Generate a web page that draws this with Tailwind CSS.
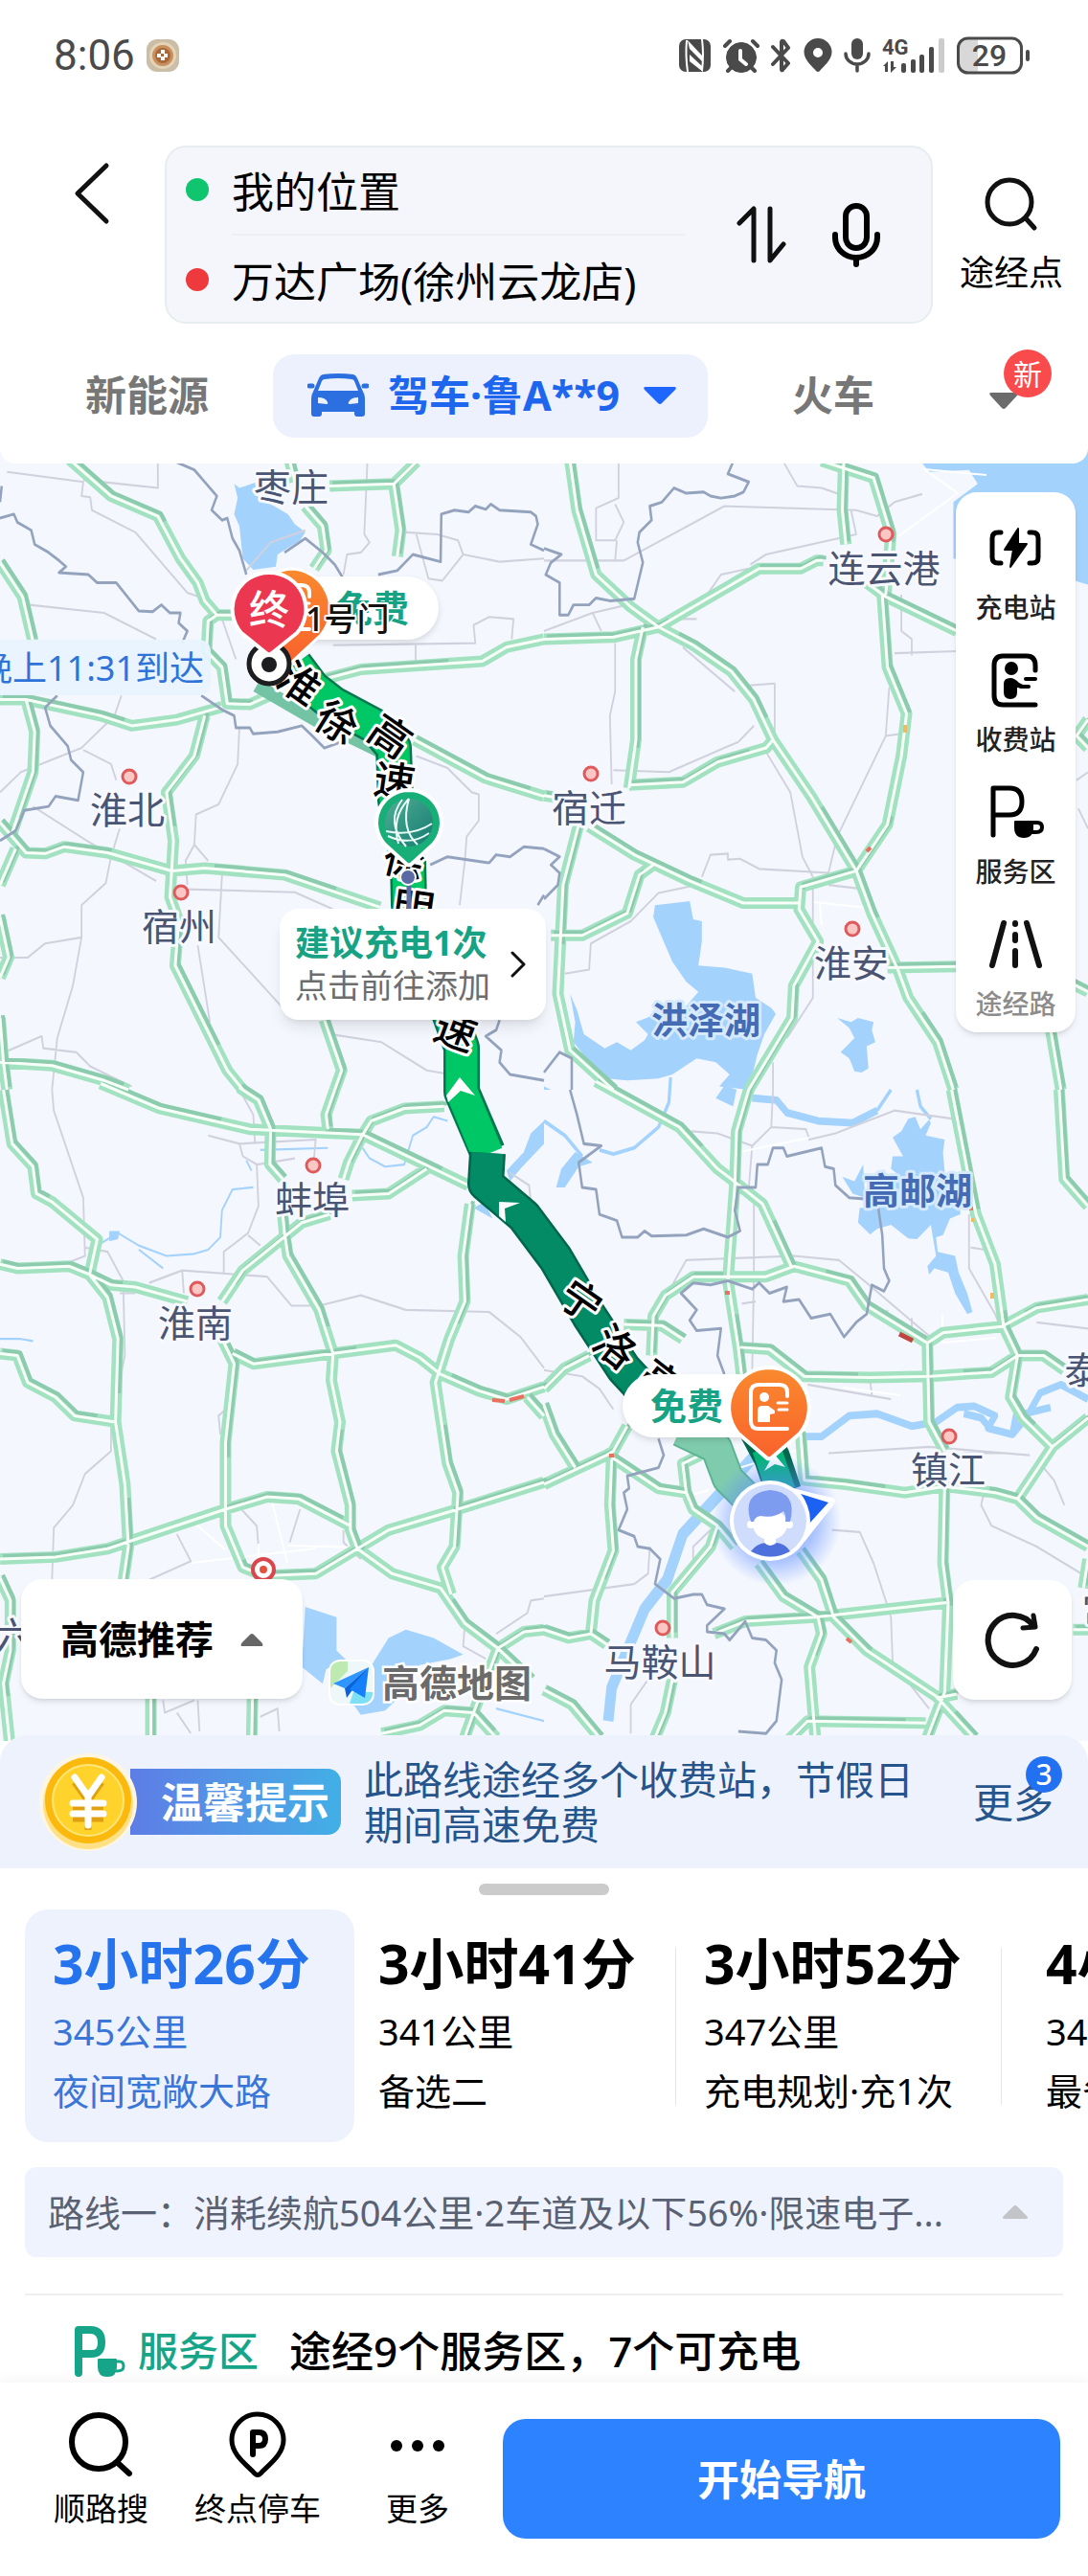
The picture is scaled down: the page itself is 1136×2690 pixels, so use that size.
<!DOCTYPE html>
<html lang="zh-CN">
<head>
    <meta charset="UTF-8">
    <meta name="viewport" content="width=device-width, initial-scale=1.0">
    <title>高德地图 - 路线规划</title>
    <script src="https://cdn.jsdelivr.net/npm/@tailwindcss/browser@4"></script>
</head>
<body class="bg-white text-black overflow-x-hidden font-['Noto_Sans','Noto_Sans_CJK_SC',sans-serif]">

    <!-- 顶部 -->
    <header class="relative z-10 bg-white rounded-b-2xl">
        <!-- 状态栏 -->
        <div class="flex items-center justify-between h-[116px] pl-14 pr-[59px] text-[#4a4a4a]">
            <div class="flex items-center gap-3">
                <span class="text-[44px] leading-none font-['Roboto',sans-serif]">8:06</span>
                <svg class="w-[34px] h-[34px]" viewBox="0 0 34 34">
                    <rect width="34" height="34" rx="11" fill="#cbbda6"/>
                    <circle cx="17" cy="17" r="14" fill="#e3d3b8"/>
                    <circle cx="17" cy="17" r="11" fill="#c98f5c"/>
                    <circle cx="17" cy="17" r="8" fill="#a8683a"/>
                    <path d="M17 11v12M11 17h12" stroke="#fff" stroke-width="4" stroke-dasharray="4 3"/>
                </svg>
            </div>
            <div class="flex items-center gap-3">
                <!-- NFC -->
                <svg class="w-[34px] h-9" viewBox="0 0 34 36" fill="currentColor">
                    <rect x="0" y="1" width="33" height="34" rx="7"/>
                    <path d="M8 2q-1.500 16 1 33M24 1q2 16 0 33" fill="none" stroke="#fff" stroke-width="2"/>
                    <path d="M9 2L24 18v6L11 11zM11 17l14 13v5L11 24z" fill="#fff"/>
                </svg>
                <!-- 闹钟 -->
                <svg class="w-[38px] h-9" viewBox="0 0 38 36" fill="currentColor" stroke="currentColor" stroke-linecap="round">
                    <circle cx="19" cy="20" r="15.500"/>
                    <path d="M2 8l5-5M36 8l-5-5M8 31l-3 3M30 31l3 3" stroke-width="4"/>
                    <path d="M18 13v9l6 5" fill="none" stroke="#fff" stroke-width="4"/>
                </svg>
                <!-- 蓝牙 -->
                <svg class="w-[22px] h-9" viewBox="0 0 22 36" fill="none" stroke="currentColor" stroke-width="4" stroke-linecap="round" stroke-linejoin="round">
                    <path d="M2 9l16 17-6 7q-1 1-1-1V4q0-2 2-1l5 7L2 27"/>
                </svg>
                <!-- 定位 -->
                <svg class="w-[30px] h-9" viewBox="0 0 30 36" fill="currentColor">
                    <path fill-rule="evenodd" d="M15 0a14.500 14.500 0 0 1 14.500 14.500C29.500 23 20 30 17 34q-2 2-4 0C10 30 .5 23 .5 14.500A14.500 14.500 0 0 1 15 0zm0 10a5 5 0 1 0 0 10 5 5 0 0 0 0-10z"/>
                </svg>
                <!-- 麦克风 -->
                <svg class="w-[28px] h-9" viewBox="0 0 28 36" fill="none" stroke="currentColor" stroke-width="3.500" stroke-linecap="round">
                    <rect x="8" y="0" width="12" height="22" rx="6" fill="currentColor" stroke="none"/>
                    <path d="M2 16a12 11 0 0 0 24 0M14 28v6"/>
                </svg>
                <!-- 信号 -->
                <svg class="w-[66px] h-9" viewBox="0 0 66 36" fill="currentColor">
                    <text x="0" y="17" font-size="22" font-weight="700" font-family="Roboto, sans-serif">4G</text>
                    <path d="M1 29l5-5v11h-3v-6zM9 24h3v6h3l-6 6z"/>
                    <rect x="20" y="26" width="5" height="10" rx="2"/>
                    <rect x="30" y="22" width="5" height="14" rx="2"/>
                    <rect x="39" y="17" width="5" height="19" rx="2"/>
                    <rect x="49" y="9" width="5" height="27" rx="2"/>
                    <rect x="59" y="0" width="6" height="36" rx="2" fill="#ccc"/>
                </svg>
                <!-- 电量 -->
                <svg class="w-[78px] h-10" viewBox="0 0 78 40">
                    <path d="M12 2h10v36H12A10 10 0 0 1 2 28V12A10 10 0 0 1 12 2z" fill="#d8d8d8"/>
                    <rect x="1.500" y="2" width="66" height="36" rx="10" fill="none" stroke="currentColor" stroke-width="3"/>
                    <rect x="72" y="14" width="4" height="12" rx="2" fill="currentColor"/>
                    <text x="34" y="31" font-size="32" font-weight="500" text-anchor="middle" fill="currentColor" font-family="Roboto, sans-serif">29</text>
                </svg>
            </div>
        </div>

        <!-- 起终点 -->
        <div class="flex items-start pt-9 pr-[26px]">
            <button aria-label="返回" class="w-[172px] pt-4 pl-[74px]">
                <svg class="w-11 h-[68px]" viewBox="0 0 44 68" fill="none" stroke="#111" stroke-width="5" stroke-linecap="round" stroke-linejoin="round">
                    <path d="M37 5L7 34l30 29"/>
                </svg>
            </button>
            <div class="flex flex-1 items-center h-[186px] pl-5 pr-[53px] rounded-[22px] border-2 border-[#e7edef] bg-[#f4f6fb]">
                <div class="flex-1 min-w-0">
                    <label class="flex items-center gap-6 h-[92px]">
                        <span class="size-6 shrink-0 rounded-full bg-[#0fc66e]"></span>
                        <input type="text" aria-label="起点" value="我的位置" class="w-full min-w-0 h-[60px] text-[44px] leading-none outline-none">
                    </label>
                    <div class="ml-12 border-t-2 border-[#eceff3]"></div>
                    <label class="flex items-center gap-6 h-[92px]">
                        <span class="size-6 shrink-0 rounded-full bg-[#ee3a3c]"></span>
                        <input type="text" aria-label="终点" value="万达广场(徐州云龙店)" class="w-full min-w-0 h-[60px] text-[44px] leading-none outline-none">
                    </label>
                </div>
                <button aria-label="交换起终点" class="ml-[54px] mr-12">
                    <svg class="w-[52px] h-[62px]" viewBox="0 0 52 62" fill="none" stroke="#111" stroke-width="5" stroke-linecap="round" stroke-linejoin="round">
                        <path d="M3 19L18 4v54M35 4v54l14-17"/>
                    </svg>
                </button>
                <button aria-label="语音输入">
                    <svg class="w-[50px] h-[68px]" viewBox="0 0 50 68" fill="none" stroke="#000" stroke-width="6" stroke-linecap="round">
                        <rect x="14" y="4" width="22" height="44" rx="11"/>
                        <path d="M3 34v3a22 21 0 0 0 44 0v-3M25 58v7"/>
                    </svg>
                </button>
            </div>
            <button class="flex flex-col items-center w-[108px] ml-7 pt-8 text-4xl leading-[54px]">
                <svg class="w-14 h-[58px] mb-4" viewBox="0 0 56 58" fill="none" stroke="#111" stroke-width="5" stroke-linecap="round">
                    <circle cx="26" cy="27" r="23"/>
                    <path d="M43 44l9 10"/>
                </svg>
                途经点
            </button>
        </div>

        <!-- 出行方式 -->
        <nav class="flex items-center h-[146px] pt-1 pl-[89px] pr-[38px] text-[43px] font-bold text-[#777]">
            <button>新能源</button>
            <button class="flex items-center h-[87px] ml-[67px] pl-9 pr-8 rounded-[22px] bg-[#ecf1fd] text-[#1f66ee]">
                <svg class="w-16 h-[46px] mr-5" viewBox="0 0 64 46">
                    <path fill="#2b6fe0" fill-rule="evenodd" d="M16 1Q32-1 48 1q3 1 4 4l6 14q2 3 2 7v16q0 3-3 3h-5q-3 0-3-3v-2H15v2q0 3-3 3H7q-3 0-3-3V26q0-4 2-7l6-14q1-3 4-4zm2 5q-2 0-3 2l-4 10h42L49 8q-1-2-3-2Q32 4 18 6zM11 25v6l9 1q2 0 1-2-2-5-10-5zm42 0v6l-9 1q-2 0-1-2 2-5 10-5z"/>
                    <path d="M2 13h3M59 13h3" stroke="#2b6fe0" stroke-width="5" stroke-linecap="round"/>
                </svg>
                驾车·鲁A**9
                <svg class="w-9 h-5 ml-6" viewBox="0 0 36 20"><path d="M3 1h30q3 0 1 3L20 18q-2 2-4 0L2 4Q0 1 3 1z" fill="#1f66ff"/></svg>
            </button>
            <button class="ml-[88px]">火车</button>
            <button aria-label="更多出行方式" class="relative ml-auto w-[66px] h-12">
                <svg class="w-8 h-5 mt-3" viewBox="0 0 32 20"><path d="M3 1h26q3 0 1 3L18 17q-2 2-4 0L2 4Q0 1 3 1z" fill="#6b6b6b"/></svg>
                <span class="absolute -top-6 right-0 flex items-center justify-center size-[50px] rounded-full bg-[#f94a4c] text-white text-[30px] font-normal">新</span>
            </button>
        </nav>
    </header>

    <!-- 地图 -->
    <main class="relative -mt-4 h-[1350px] overflow-hidden bg-[#f4f7fe]">
        <svg class="block w-full h-full" viewBox="0 -14 1136 1350" preserveAspectRatio="xMidYMid slice" fill="none" stroke-linejoin="round">
            <defs>
                <g id="roads">
                    <path vector-effect="non-scaling-stroke" transform="translate(0 -4) scale(.36225 .42091)" d="M205 -20L205 8L320 95L455 145L520 250L570 310L590 355L625 390L600 405L595 480L640 520L655 610L720 612L790 585M625 390L690 390M0 260L65 345L95 455M0 600L75 600L290 640L380 665L510 650L640 618M75 600L100 680L95 780L35 930M590 640L560 740L480 830L500 950L495 1020L490 1090L515 1150L505 1260L655 1520L700 1568M0 905L75 980L130 982L185 965L310 980L495 1025L590 1018L820 1035L1095 1115M45 970L0 1060M0 1140L25 1240L0 1290M0 1390L10 1500L20 1568M0 1500L150 1508L300 1545L370 1568M935 1395L985 1520L965 1568M950 70L1135 65L1200 10M1135 65L1155 180L1145 245M830 -10L850 60M880 120L930 170L940 230L905 275M930 550L1040 525L1390 505L1460 470L1568 450M1195 700L1400 795L1568 840"/>
                    <path vector-effect="non-scaling-stroke" transform="translate(568 -4) scale(.36225 .42091)" d="M75 -20L75 8L95 130L150 290L250 370L330 420L430 465L540 530L605 600L660 700L770 840L900 1025L945 1130L1020 1270L1050 1340L1135 1450L1180 1568M865 -20L860 130L870 215M800 8L950 50L1000 190L985 340M0 450L200 445L330 420L620 275L740 275L785 255L805 255M285 420L265 500L265 700L245 820M245 812L400 805L500 755L640 720L660 700M0 838L30 842M930 310L985 345L1190 430M975 340L990 520L1045 635L1030 740L990 910L900 1025L740 1065L735 1120L790 1200L720 1310L715 1390L590 1568M130 915L260 985L420 1050L575 1105L735 1105M100 910L55 1060L40 1330L75 1470L200 1568M20 1185L110 1185L240 1130L275 1035L315 1010M990 1265L1190 1262M1500 1295L1568 1325M1568 650L1535 690L1568 720M1460 1418L1490 1568"/>
                    <path vector-effect="non-scaling-stroke" transform="translate(0 656) scale(.36225 .43367)" d="M290 -15L460 45L720 95L1045 108L1350 230M690 -5L745 25L780 95L778 180L815 215M965 0L940 60L945 95M1280 40L1165 45L1070 75L1045 108L1005 175L990 215M1230 190L1120 250L1015 255M10 0L35 130L95 185L105 250L150 270L280 360L258 445L310 500L340 600L333 800L360 950L370 1100L355 1185M0 420L50 430L200 425L258 445L320 470L390 475L540 510M0 635L50 640L80 705L160 740L215 785L333 800M815 300L820 345L830 400L920 530L960 635L955 700L980 800L970 870L1010 1000L1010 1060L1030 1105L1130 1165L1270 1200L1340 1285L1435 1345L1530 1420M950 300L870 320L700 435L640 510M640 600L675 660L650 850L650 1050L700 1150L760 1170L910 1165L1120 1060L1320 1010L1568 945M670 635L730 660L1140 615L1210 645L1270 685L1380 725L1460 745L1568 715M1520 740L1568 785M1355 275L1335 400L1340 510L1295 600L1255 705L1290 900L1320 970L1310 1100L1275 1150L1300 1215M0 1130L160 1125L310 1105L650 1010L770 980L860 985L1010 1050M0 1175L30 1230L30 1350L10 1430L30 1590M435 1450L435 1590M728 1450L725 1590M1100 1550L1210 1530L1280 1495L1365 1500L1430 1560M1365 1500L1335 1570M1365 1500L1435 1345L1510 1305L1568 1300"/>
                    <path vector-effect="non-scaling-stroke" transform="translate(568 656) scale(.36225 .43367)" d="M150 -20L390 90L500 190L555 225L630 275L715 430M590 0L555 100L550 230L530 460L560 620L570 690M0 720L60 670L130 640M230 565L340 568L400 600M310 640L315 545L350 495L430 450L640 450L720 425L880 460L930 520L1105 610L1150 585L1320 570L1420 525L1568 505M1175 0L1245 300L1300 420L1325 570L1365 640L1345 740L1380 790L1465 860L1365 985M1485 0L1500 215L1568 280M565 620L650 625L750 690L940 693L1115 690L1290 680L1365 640L1440 640L1500 675M1105 610L1110 800L1155 870M1155 950L1150 1140L1165 1235L1155 1450L1100 1570M0 760L30 830L90 910M0 950L180 880L200 870L240 810M195 890L190 1000L200 1110L145 1230L135 1310M195 885L330 960L410 970L400 900L450 880M410 970L430 1010L500 1050L550 1100M500 1050L480 1100L370 1210L370 1320M740 830L750 940L870 950L1040 970L1155 955L1300 970L1365 985L1420 1030L1568 1100M1465 860L1568 790M740 1110L800 1180L835 1270L930 1350L1130 1460L1240 1560M620 1140L690 1220L790 1270L800 1310L765 1390L785 1590M490 1310L580 1280L780 1270L1160 1235M0 1300L70 1320L135 1310L180 1335M0 1445L80 1480L160 1560M370 1420L350 1500L315 1570M700 1570L760 1520L1100 1525M1130 1465L1190 1455M1525 1300L1568 1300M1568 1130L1555 1200"/>
                </g>
                <radialGradient id="halo"><stop offset=".6" stop-color="#5b8cff" stop-opacity=".5"/><stop offset="1" stop-color="#5b8cff" stop-opacity="0"/></radialGradient>
                <linearGradient id="orange" x2="0" y2="1"><stop stop-color="#f98a2e"/><stop offset="1" stop-color="#f9622c"/></linearGradient>
                <linearGradient id="ball" x2="1" y2="1"><stop stop-color="#4fae95"/><stop offset="1" stop-color="#157a70"/></linearGradient>
                <g id="toll" fill="none" stroke="#fff" stroke-width="4" stroke-linecap="round" stroke-linejoin="round">
                    <path d="M19 -11v-4q0-8-8-8h-22q-8 0-8 8v30q0 8 8 8h30"/>
                    <path d="M10 3h9M9-4h10" stroke-width="3"/>
                    <circle cx="-5" cy="-10" r="5" fill="#fff" stroke="none"/>
                    <path d="M-12 16V4q0-5 5-5h6l7 5v3l-5 1v8z" fill="#fff" stroke="none"/>
                </g>
            </defs>

            <!-- 水域 -->
            <g fill="#a3d2fd">
                <path transform="translate(0 -4) scale(.36225 .42091)" d="M675 65L690 75L735 62L740 95L790 120L830 140L850 165L880 185L865 205L800 240L795 270L730 278L700 250L690 170L675 140L685 100Z"/>
                <path transform="translate(568 -4) scale(.36225 .42091)" d="M1050 -30L1568 -30L1568 315L1510 300L1180 250L1180 110L1250 65L1225 30L1110 35Z"/>
                <path transform="translate(568 -4) scale(.36225 .42091)" d="M320 1110L375 1105L420 1100L430 1145L455 1150L455 1200L445 1260L520 1265L600 1280L610 1340L655 1365L668 1380L635 1430L615 1480L590 1568L505 1560L535 1530L495 1500L440 1490L370 1530L330 1540L240 1545L180 1540L140 1510L85 1450L90 1400L75 1330L95 1370L115 1430L175 1465L210 1450L250 1470L290 1445L300 1430L265 1400L310 1385L400 1370L445 1325L410 1300L370 1250L340 1190L315 1140Z"/>
                <path transform="translate(568 -4) scale(.36225 .42091)" d="M845 1390L885 1400L905 1390L950 1400L945 1420L955 1450L930 1460L935 1515L915 1525L895 1522L880 1490L855 1475L895 1440L880 1415ZM0 1568L0 1560L20 1568Z"/>
                <path transform="translate(0 656) scale(.36225 .43367)" d="M880 1245L970 1270L970 1350L1000 1375L940 1395L930 1430L870 1390ZM1075 1380L1120 1320L1170 1300L1250 1320L1335 1360L1300 1370L1210 1385L1180 1440L1110 1495L1040 1505L1010 1470ZM1568 75L1530 105L1510 150L1460 195L1470 220L1500 190L1568 130ZM315 340L345 340L340 360L315 365ZM1365 285L1395 270L1420 310Z"/>
                <path transform="translate(568 656) scale(.36225 .43367)" d="M1005 115L1030 100L1050 70L1070 65L1085 95L1110 72L1115 80L1100 110L1155 120L1150 150L1155 200L1195 210L1200 300L1170 310L1150 350L1130 355L1135 390L1185 400L1195 440L1220 490L1235 535L1220 540L1185 490L1165 440L1125 430L1110 445L1105 425L1130 400L1115 325L1075 360L1050 358L1000 325L960 335L940 348L905 320L910 285L960 280L1015 200L1000 190L1005 160L1035 160ZM860 210L895 220L920 180L925 260L890 250ZM495 20L520 -10L555 0L545 40ZM35 235L50 190L90 150L140 175L100 185L60 235Z"/>
            </g>
            <g stroke="#a3d2fd">
                <path transform="translate(0 656) scale(.36225 .43367)" stroke-width="5" d="M290 370L340 345L400 375L480 400L560 395L600 385L635 355L640 290L670 240L730 235M750 145L945 140M1045 140L1065 165L1110 185L1165 180L1190 110L1230 90L1250 65L1290 75M710 170L725 195M400 385L470 430M1430 1490L1568 1520M0 600L60 600L95 605"/>
                <path transform="translate(568 656) scale(.36225 .43367)" stroke-width="9" d="M365 -30L360 30L330 90L260 140L200 155L160 145M0 75L60 110L110 160M1075 0L1085 40L1115 70M960 50L1000 0"/>
                <path transform="translate(568 656) scale(.36225 .43367)" stroke-width="18" d="M600 20L670 25L700 55L790 75L890 80L960 50M740 835L800 835L880 785L960 780L1060 810L1130 800L1190 765L1240 762L1300 785L1280 815L1350 830L1390 790L1430 730L1490 710L1568 745M1210 780L1260 790L1290 820M1350 830L1360 785L1460 765"/>
                <path transform="translate(568 656) scale(.36225 .43367)" stroke-width="30" d="M620 870L510 970L400 1070L355 1180L290 1250L245 1340L195 1440L185 1520"/>
            </g>

            <!-- 普通道路 -->
            <g stroke="#d0d1dd" stroke-width="5">
                <path transform="translate(0 -4) scale(.36225 .42091)" d="M20 35L240 60L235 95L260 98L265 130L390 185L540 335L590 350M240 55L455 75L455 -10M85 365L300 385L450 450M1060 -10L1050 190L1065 210L1040 235L1000 240L990 290M1170 185L1260 190L1320 205L1335 240L1275 305L1235 300L1200 190M1335 240L1440 258L1568 250M960 465L1370 460L1365 415L1410 395L1480 400L1475 450M1198 460L1198 510M690 670L685 760L630 860L565 885L560 960L600 1000M560 960L535 1000L540 1060M515 1070L850 1078L960 1120M640 1035L630 1190L810 1360M95 865L250 950L450 1050M345 920L320 990L305 1055L235 1110L235 1190L210 1310L165 1440L150 1568M0 1240L80 1240L130 1205L235 1190M0 1480L120 1435L125 1465L220 1475L260 1510L380 1560M240 725L320 760L335 800M350 590L330 640L235 720L60 780L0 830M950 1430L1100 1450L1230 1520L1300 1530M1200 740L1290 770L1360 830L1380 835L1380 900L1345 940L1340 1000L1325 1110M570 1210L605 1400M640 400L680 500M710 280L780 210L880 180"/>
                <path transform="translate(568 -4) scale(.36225 .42091)" d="M215 -10L215 100L150 125L150 205L205 205L230 160L205 115M0 255L230 255L520 120L900 130L960 145L1010 110L1090 90M210 205L205 255M690 10L730 70L800 75L850 90M885 130L900 190L640 240L595 265M590 275L510 290L470 340M440 400L375 400M0 430L140 385L240 365M140 385L165 430M205 460L205 580L190 640L195 810M200 775L360 780L560 705L605 665M590 565L665 560L665 680M400 470L550 580M640 730L710 830L745 990L775 1040M455 1040L480 985L530 982L530 997L565 995L620 1020L820 1030M985 690L845 940L820 1030M995 570L985 690L1030 685M1030 340L1030 430L1060 450L1060 490M1010 485L1190 480M60 1280L130 1270L135 1205L250 1150L330 1080L440 1060M775 1040L775 1340L700 1440M1535 800L1568 780M1540 870L1568 920M660 1500L660 1568M820 1060L920 1070"/>
                <path transform="translate(0 656) scale(.36225 .43367)" d="M150 0L155 50L240 260L245 400L200 415M245 380L310 390L355 460L360 640L320 800L320 870L245 925L210 1000L155 1055L150 1180M600 110L690 130L910 120L905 165M850 165L740 180L745 280L715 345L645 390L645 440M690 130L700 160L740 180M715 350L750 375M430 465L525 435L530 490M525 435L770 450L840 520L920 520L1040 495L1170 530L1410 535L1500 595L1568 670M345 490L390 490M650 770L630 785L635 830M690 1005L740 1050L745 1100M865 1010L835 1090M510 1070L550 1135L430 1180M990 1060L990 1090L1040 1130M1340 1285L1335 1340L1400 1370M1430 1310L1520 1260L1530 1230L1568 1225M470 1470L475 1500L560 1470M570 1470L575 1545M750 1510L800 1490L805 1545M510 1500L550 1550M690 0L730 60L735 130M1470 200L1525 230L1530 270"/>
                <path transform="translate(568 656) scale(.36225 .43367)" d="M660 0L655 90L755 95L765 120L840 105L1010 50L1180 70M600 135L500 105L425 100M655 90L600 135L590 240M605 260L605 450L600 680M320 545L410 410L720 400L850 410L930 465L1120 600M1225 300L1225 430L1300 540L1330 600M1230 380L1270 385M570 515L610 510M990 530L985 550M1060 550L1060 580M1420 560L1568 575M820 875L1110 860L1400 880M1210 875L1330 875M830 1060L910 1065L950 1140L985 1230L1000 1270L1005 1380L1110 1490M1310 970L1265 980L1260 1000L1290 1050L1420 1100L1568 1175M0 675L110 690L160 720L200 770M0 1220L260 1190L300 1165L305 1100M300 1420L250 1480L250 1550M100 1480L130 1530M760 710L1000 745M940 700L945 735M430 1130L430 1100L480 1060M1430 900L1470 940L1500 1000"/>
            </g>
            <g stroke="#fff" stroke-width="2">
                <path d="M938 78L1000 33L965 8L1030 14M850 460L905 466M856 462L858 484M772 721L845 706M198 1104L235 1136M200 1150L330 1135M284 1086L300 1150M270 1130L270 1156M300 1132L380 1134M742 1060L840 1030M740 1074L720 1080M984 890L984 920L1040 915M880 967L940 975"/>
            </g>

            <!-- 高速公路 -->
            <use href="#roads" stroke="#a3e2c1" stroke-width="12"/>
            <use href="#roads" stroke="#8dcbae" stroke-width="4" stroke-dasharray="130 110" transform="translate(3 -3)"/>
            <use href="#roads" stroke="#f7fff8" stroke-width="3"/>
            <g stroke="#e8705f" stroke-width="4">
                <path d="M514 980L527 981M532 980L547 976M757 868h5M1012 780h4M905 407l4-4M884 1229l5 4M636 1038h5"/>
                <path d="M939 911L953 918" stroke="#c0473f" stroke-width="5"/>
                <path d="M945 275v8M1014 792h3M1036 868v6" stroke="#f0bb60"/>
            </g>

            <!-- 省界 -->
            <g stroke="#94a3bd" stroke-width="7">
                <path transform="translate(0 -4) scale(.36225 .42091)" d="M505 10L560 30L590 60L625 95L610 130L640 155L655 150L670 200L690 230L710 290M0 150L40 140L50 160L90 180L100 215L140 235L170 255L190 270L170 285L255 290L280 310L335 310L400 380L440 382L465 365L490 385L520 385L515 410L540 430L525 460M0 110L5 70M165 590L130 620L145 665L195 715L205 750L240 780L225 850L160 840L140 865L70 875L45 925L0 950M580 590L640 625L675 640L680 670L720 670L730 685L800 680L870 665L900 690L935 720L1000 700M820 235L880 200L930 235L965 265L990 300M1090 290L1145 280L1190 240L1270 258L1272 140L1310 130L1350 135L1370 120L1400 128L1415 115L1440 130L1530 135L1545 145L1550 165L1530 215L1568 230M1240 1010L1290 990L1410 1005L1430 985L1470 990L1510 965L1568 970M1568 1085L1550 1110M1440 1395L1430 1420L1400 1435L1445 1470L1440 1500L1470 1530L1568 1545"/>
                <path transform="translate(568 -4) scale(.36225 .42091)" d="M555 -10L530 40L590 60L575 85L550 95L510 100L480 95L460 85L410 88L375 75L340 110L305 120L310 155L275 185L270 210L285 260L260 350L190 355L150 348L130 365L85 365L70 390L45 390L45 310L5 290L20 260L50 240L0 225M0 970L45 990L20 1010L45 1030L40 1060L0 1095M0 1525L45 1475L80 1490L80 1568"/>
                <path transform="translate(568 656) scale(.36225 .43367)" d="M75 0L85 30L95 60L115 130L165 135L100 175L110 235L150 240L160 300L210 315L225 355L270 355L290 340L310 352L410 350L460 335L530 355L565 340L550 290L560 235L610 235L615 180L645 180L660 140L690 140L700 160L800 140L810 185L835 190L840 230L880 260L960 265L975 350L980 430L995 460L980 485L945 470L930 540L900 560L865 595L825 540L770 550L735 505L690 510L700 475L650 490L620 465L600 480L530 460L480 470L430 465L395 490L440 530L420 555L440 580L510 575L500 640L520 685M330 840L345 880L330 910L240 930L245 960L230 970L240 1010L215 1060L260 1075L270 1100L305 1105L335 1130L320 1190L375 1225L430 1215L455 1215L470 1240L520 1250L470 1290L470 1305L520 1310L535 1325L580 1280L600 1320L640 1325L670 1350L665 1380L685 1420L670 1520L640 1550L560 1545"/>
            </g>

            <!-- 备选路线 -->
            <path d="M268 234L330 270L400 304" stroke="#74c3a4" stroke-width="14"/>
            <path d="M710 1012L748 1030L760 1062L790 1092" stroke="#5cb491" stroke-width="34"/>
            <path d="M710 1012L748 1030L760 1062L790 1092" stroke="#7fcbae" stroke-width="30"/>

            <!-- 推荐路线 -->
            <path d="M308 212L326 236L348 253L391 276L411 299L413 354L426 417L427 463L471 581L482 612L482 658L509 721" stroke="#03784f" stroke-width="38"/>
            <path d="M308 212L326 236L348 253L391 276L411 299L413 354L426 417L427 463L471 581L482 612L482 658L509 723" stroke="#00c766" stroke-width="33"/>
            <path d="M509 722L507 754L547 788L580 832L615 892L651 947L700 1000M790 1010L806 1040L818 1076" stroke="#02664c" stroke-width="38"/>
            <path d="M509 722L507 754L547 788L580 832L615 892L651 947L700 1000" stroke="#038b66" stroke-width="33"/>
            <path d="M800 1030L816 1076" stroke="#04b378" stroke-width="30"/>
            <g fill="#fff">
                <path d="M480 643L496 662L481 657L468 669L466 662Z"/>
                <path d="M521 773L543 774L527 780L528 794L521 788Z"/>
                <path d="M808 1036L820 1050L809 1047L798 1054Z"/>
            </g>

            <!-- 道路名称 -->
            <g fill="#000" stroke="#fff" stroke-width="6" paint-order="stroke" font-size="43" font-weight="500" text-anchor="middle" dominant-baseline="central">
                <text transform="translate(313 231) rotate(35)">淮</text>
                <text transform="translate(352 272) rotate(32)">徐</text>
                <text transform="translate(408 286) rotate(35)">高</text>
                <text transform="translate(412 333) rotate(8)">速</text>
                <text transform="translate(422 416) rotate(14)">徐</text>
                <text transform="translate(432 466) rotate(8)">明</text>
                <text transform="translate(476 594) rotate(20)">速</text>
                <text transform="translate(607 876) rotate(35)">宁</text>
                <text transform="translate(643 924) rotate(38)">洛</text>
                <text transform="translate(690 960) rotate(38)">高</text>
            </g>

            <!-- 城市 -->
            <g fill="#fbc7c5" stroke="#e05a5c" stroke-width="3">
                <circle cx="135" cy="329" r="7"/><circle cx="189" cy="450" r="7"/>
                <circle cx="925" cy="76" r="7"/><circle cx="617" cy="326" r="7"/>
                <circle cx="890" cy="488" r="7"/><circle cx="327" cy="735" r="7"/>
                <circle cx="206" cy="864" r="7"/><circle cx="991" cy="1018" r="7"/>
                <circle cx="692" cy="1218" r="7"/>
            </g>
            <circle cx="275" cy="1157" r="11" fill="#fff" stroke="#d9474c" stroke-width="4"/>
            <circle cx="275" cy="1157" r="4" fill="#e0543f"/>
            <g fill="#4a5473" stroke="#f7f9ff" stroke-width="6" paint-order="stroke" font-size="39" text-anchor="middle" dominant-baseline="central">
                <text x="304" y="25">枣庄</text>
                <text x="133" y="362">淮北</text>
                <text x="187" y="484">宿州</text>
                <text x="923" y="110">连云港</text>
                <text x="615" y="360">宿迁</text>
                <text x="889" y="522">淮安</text>
                <text x="326" y="769">蚌埠</text>
                <text x="204" y="898">淮南</text>
                <text x="990" y="1051">镇江</text>
                <text x="689" y="1252">马鞍山</text>
                <text x="1131" y="947">泰</text>
                <text x="1149" y="1196">常</text>
                <text x="14" y="1224">六</text>
                <g fill="#456bb5" font-size="38" font-weight="700" stroke="#d6eafd">
                    <text x="737" y="582">洪泽湖</text>
                    <text x="958" y="760">高邮湖</text>
                </g>
            </g>

            <!-- 到达时间 -->
            <rect x="-30" y="186" width="250" height="58" rx="12" fill="#e8f3fe" fill-opacity=".95"/>
            <text x="213" y="215" font-size="36" fill="#2f73d9" text-anchor="end" dominant-baseline="central">晚上11:31到达</text>

            <!-- 终点 -->
            <rect x="270" y="120" width="188" height="66" rx="33" fill="#fff" class="drop-shadow-md"/>
            <text x="389" y="152" font-size="38" font-weight="700" fill="#17a284" text-anchor="middle" dominant-baseline="central">免费</text>
            <path d="M304 112a42 42 0 0 1 31 69L306 208q-2 3-5 0L275 181A42 42 0 0 1 304 112z" fill="url(#orange)" stroke="#fff" stroke-width="3"/>
            <use href="#toll" transform="translate(304 152)"/>
            <circle cx="281" cy="211" r="21" fill="#fff" stroke="#1d1d1f" stroke-width="5"/>
            <circle cx="281" cy="212" r="8" fill="#1d1d1f"/>
            <path d="M281 116a38 38 0 0 1 29 63L284 200q-3 3-6 0L252 179A38 38 0 0 1 281 116z" fill="#ec3750" stroke="#fff" stroke-width="4"/>
            <text x="281" y="153" font-size="42" font-weight="500" fill="#fff" text-anchor="middle" dominant-baseline="central">终</text>
            <text x="319" y="164" font-size="34" font-weight="500" fill="#111" stroke="#fff" stroke-width="4" paint-order="stroke" dominant-baseline="central">1号门</text>

            <!-- 球馆 -->
            <path d="M427 434v34" stroke="#5a6ba3" stroke-width="5"/>
            <path d="M427 343a34 34 0 0 1 25 57L430 420q-3 3-6 0L402 400A34 34 0 0 1 427 343z" fill="#18ae78" stroke="#fff" stroke-width="4"/>
            <circle cx="427" cy="377" r="25" fill="url(#ball)"/>
            <path d="M403 386Q430 392 451 378M405 391Q428 402 448 388M427 352Q408 372 416 399M420 353Q402 376 424 402M427 352Q418 384 436 400" stroke="#e9fff8" stroke-width="2"/>
            <circle cx="426" cy="434" r="8" fill="#5a6ba3" stroke="#fff" stroke-width="2"/>

            <!-- 当前位置 -->
            <rect x="650" y="953" width="170" height="66" rx="33" fill="#fff" class="drop-shadow-md"/>
            <text x="717" y="985" font-size="38" font-weight="700" fill="#17a284" text-anchor="middle" dominant-baseline="central">免费</text>
            <path d="M803 946a42 42 0 0 1 32 69L806 1040q-3 3-6 0L771 1015A42 42 0 0 1 803 946z" fill="url(#orange)" stroke="#fff" stroke-width="4"/>
            <use href="#toll" transform="translate(803 987)"/>
            <circle cx="810" cy="1106" r="68" fill="url(#halo)"/>
            <path d="M828 1072Q850 1078 870 1082Q874 1085 870 1090L840 1128z" fill="#fff"/>
            <path d="M836 1078L865 1087L844 1110Q846 1090 836 1078z" fill="#1c62f2"/>
            <circle cx="804" cy="1106" r="42" fill="#fff"/>
            <circle cx="804" cy="1106" r="38" fill="#cfdcfb"/>
            <path d="M784 1138q6-8 15-9q6 5 12 0q9 1 14 9q-20 11-41 0z" fill="#4d70dd"/>
            <path d="M798 1120h12v9q-6 6-12 0z" fill="#fff"/>
            <ellipse cx="804" cy="1110" rx="18" ry="16" fill="#fff"/>
            <circle cx="784" cy="1110" r="4" fill="#fff"/><circle cx="824" cy="1110" r="4" fill="#fff"/>
            <path d="M784 1107Q774 1077 804 1074Q833 1076 825 1107L820 1107Q821 1100 818 1096Q808 1104 794 1101Q788 1102 787 1107z" fill="#7d9bef"/>
        </svg>

        <!-- 充电提示 -->
        <button class="absolute left-[292px] top-[481px] flex items-center gap-5 h-[116px] pl-4 pr-5 rounded-[20px] bg-white shadow-lg text-left">
            <span class="text-[34px] leading-[44px] text-[#6d6d6d]"><b class="block text-[36px] text-[#17a284]">建议充电1次</b>点击前往添加</span>
            <svg class="w-[18px] h-7" viewBox="0 0 18 28" fill="none" stroke="#111" stroke-width="3" stroke-linecap="round" stroke-linejoin="round"><path d="M3 2l12 12L3 26"/></svg>
        </button>

        <!-- 图层工具 -->
        <div class="absolute right-[13px] top-[46px] flex flex-col items-center gap-[26px] w-[125px] h-[564px] pt-[28px] rounded-[22px] bg-white shadow-md text-[28px] leading-[40px] font-medium text-[#222]">
            <button class="flex flex-col items-center gap-3">
                <svg class="w-[60px] h-[60px]" viewBox="0 0 60 60" fill="none" stroke="#000" stroke-width="5" stroke-linecap="round">
                    <path d="M15 14h-3q-6 0-6 6v20q0 6 6 6h3M45 14h3q6 0 6 6v20q0 6-6 6h-3"/>
                    <path d="M33 10L19 32h9l-3 18 17-24h-9z" fill="#000" stroke="#000" stroke-width="2" stroke-linejoin="round"/>
                </svg>
                充电站
            </button>
            <button class="flex flex-col items-center gap-3">
                <svg class="w-[60px] h-[60px]" viewBox="0 0 60 60" fill="none" stroke="#000" stroke-width="5" stroke-linecap="round">
                    <path d="M51 20v-5q0-10-9-10H17Q8 5 8 15v31q0 10 9 10h34"/>
                    <path d="M41 29h10M36 37h8" stroke-width="4"/>
                    <circle cx="26" cy="18" r="7" fill="#000" stroke="none"/>
                    <path d="M18 34q0-6 7-6 4 0 9 5l4 2v4l-6-1v5q0 7-7 7t-7-7z" fill="#000" stroke="none"/>
                </svg>
                收费站
            </button>
            <button class="flex flex-col items-center gap-3">
                <svg class="w-[60px] h-[60px]" viewBox="0 0 60 60" fill="none" stroke="#000" stroke-width="5" stroke-linecap="round" stroke-linejoin="round">
                    <path d="M7 54V5h17q13 0 13 14T24 33H7"/>
                    <path d="M30 40h18v6q0 10-9 10t-9-10z" fill="#000" stroke-width="2"/>
                    <path d="M48 41h5q5 0 5 5t-6 5h-4" stroke-width="4"/>
                </svg>
                服务区
            </button>
            <button class="flex flex-col items-center gap-3 text-[#8c8c8c]">
                <svg class="w-[60px] h-[60px]" viewBox="0 0 60 60" fill="none" stroke="#111" stroke-width="6" stroke-linecap="round">
                    <path d="M18 8L6 52M42 8l13 44M30 8v1M30 20v6M30 37v15"/>
                </svg>
                途经路
            </button>
        </div>

        <!-- 底部悬浮按钮 -->
        <button class="absolute left-[22px] top-[1181px] flex items-center gap-7 h-[125px] px-[41px] rounded-[22px] bg-white shadow-md text-[40px] font-bold">
            高德推荐
            <svg class="w-6 h-4" viewBox="0 0 24 16"><path d="M1 15Q0 13 2 11L10 3q2-2 4 0l8 8q2 2 1 4z" fill="#666"/></svg>
        </button>
        <div class="absolute left-[343px] top-[1264px] flex items-center gap-2">
            <svg class="size-12" viewBox="0 0 48 48">
                <rect x="1" y="1" width="46" height="46" rx="11" fill="#eef8f8" stroke="#fff" stroke-width="2"/>
                <path d="M2 12Q2 3 12 2h8v10L2 30z" fill="#bdeab0"/>
                <path d="M46 34q0 12-12 12H22l4-12z" fill="#7ee0f5"/>
                <path d="M42 8L5 25l12 5z" fill="#2f95ff"/><path d="M42 8L17 30l2 10z" fill="#0a62d8"/><path d="M42 8L22 31l16 9z" fill="#1680fb"/>
            </svg>
            <span class="text-[39px] leading-[50px] font-bold text-[#6b6b6b] [-webkit-text-stroke:5px_#fff] [paint-order:stroke]">高德地图</span>
        </div>
        <button aria-label="刷新" class="absolute right-[17px] top-[1182px] flex items-center justify-center w-[124px] h-[125px] rounded-[22px] bg-white shadow-md">
            <svg class="w-[60px] h-[60px]" viewBox="0 0 60 60" fill="none" stroke="#111" stroke-width="6" stroke-linecap="round" stroke-linejoin="round">
                <path d="M55 39A26 26 0 1 1 52 15"/>
                <path d="M52 4l2 12-13 1" stroke-width="5"/>
            </svg>
        </button>
    </main>

    <!-- 提示条 -->
    <section class="relative -mt-[6px] flex items-center h-[139px] pl-10 pr-[36px] rounded-t-[28px] bg-[#edf2fd] text-[#26548c]">
        <svg class="relative z-10 size-[104px] shrink-0" viewBox="0 0 104 104">
            <circle cx="52" cy="52" r="51" fill="#fff6e2"/>
            <circle cx="52" cy="54" r="47" fill="#ffe085"/>
            <circle cx="52" cy="50" r="45" fill="#fbb90d"/>
            <circle cx="52" cy="50" r="37" fill="#ffd32b" stroke="#ffe67a" stroke-width="2"/>
            <path d="M38 28l14 20 14-20M52 48v30M36 54h32M36 66h32" fill="none" stroke="#e0a010" stroke-width="7" transform="translate(0 3)"/>
            <path d="M38 26l14 20 14-20M52 46v30M36 53h32M36 64h32" fill="none" stroke="#fff" stroke-width="7" stroke-linecap="round"/>
        </svg>
        <strong class="-ml-2 flex items-center h-[69px] pl-[32px] pr-3 rounded-r-[14px] bg-linear-to-r from-[#5d7de6] to-[#41afe6] text-white text-[44px] whitespace-nowrap">温馨提示</strong>
        <p class="ml-6 flex-1 text-[41px] leading-[47px]">此路线途经多个收费站，节假日<br>期间高速免费</p>
        <button class="relative text-[42px] whitespace-nowrap">
            更多
            <span class="absolute -top-4 right-[-9px] flex items-center justify-center size-[38px] rounded-full bg-[#2271f3] text-white text-[30px] leading-none font-medium">3</span>
        </button>
    </section>

    <!-- 路线方案 -->
    <section class="pt-4">
        <div class="mx-auto w-[136px] h-3 rounded-full bg-[#cbcbcb]"></div>
        <div class="flex mt-[15px] pl-[26px] h-[243px] text-[38px] leading-[54px] whitespace-nowrap overflow-hidden">
            <button class="w-[344px] shrink-0 pl-[29px] pb-2 rounded-[24px] bg-[#edf2fd] text-left text-[#3a75d8]">
                <b class="block mb-2 text-[57px] leading-[72px] text-[#2673ee]">3小时26分</b>
                <span class="block mb-2">345公里</span>
                <span class="block">夜间宽敞大路</span>
            </button>
            <button class="w-[335px] shrink-0 pl-[25px] pb-2 text-left">
                <b class="block mb-2 text-[57px] leading-[72px]">3小时41分</b>
                <span class="block mb-2">341公里</span>
                <span class="block">备选二</span>
            </button>
            <span class="w-px h-[164px] mt-10 shrink-0 bg-[#e6e6e6]"></span>
            <button class="w-[339px] shrink-0 pl-[29px] pb-2 text-left">
                <b class="block mb-2 text-[57px] leading-[72px]">3小时52分</b>
                <span class="block mb-2">347公里</span>
                <span class="block">充电规划·充1次</span>
            </button>
            <span class="w-px h-[164px] mt-10 shrink-0 bg-[#e6e6e6]"></span>
            <button class="w-[339px] shrink-0 pl-[46px] pb-2 text-left">
                <b class="block mb-2 text-[57px] leading-[72px]">4小时</b>
                <span class="block mb-2">34公里</span>
                <span class="block">最省</span>
            </button>
        </div>

        <button class="flex items-center justify-between mt-[26px] mx-[26px] w-[calc(100%-52px)] h-[94px] pl-6 pr-9 rounded-xl bg-[#eff3fe] text-[38px] text-[#596172]">
            <span class="whitespace-nowrap">路线一：消耗续航504公里·2车道及以下56%·限速电子...</span>
            <svg class="w-7 h-4" viewBox="0 0 28 16"><path d="M2 15Q0 14 2 12L12 2q2-2 4 0l10 10q2 2 0 3z" fill="#c2c4c8"/></svg>
        </button>

        <div class="mt-[38px] mx-[26px] border-t-2 border-[#efefef]"></div>
        <div class="flex items-center h-[91px] pt-6 pl-[76px] whitespace-nowrap">
            <svg class="w-14 h-14 mr-3" viewBox="0 0 56 56" fill="none" stroke="#17a58a" stroke-width="8" stroke-linecap="round" stroke-linejoin="round">
                <path d="M6 51V6h12q12 0 12 13T18 31H6"/>
                <path d="M27 37h18v8q0 9-9 9t-9-9z" fill="#17a58a" stroke-width="2"/>
                <path d="M46 39h3q4 0 4 5t-7 5" stroke-width="3"/>
            </svg>
            <span class="text-[42px] font-medium text-[#17a58a]">服务区</span>
            <span class="ml-8 text-[44px] font-medium">途经9个服务区，7个可充电</span>
        </div>
    </section>

    <!-- 底部操作栏 -->
    <footer class="relative flex items-start h-[202px] pt-[38px] pl-14 pr-[29px] bg-white shadow-[0_-4px_12px_rgba(0,0,0,0.04)] text-[33px] leading-[48px] whitespace-nowrap">
        <button class="flex flex-col items-center">
            <svg class="w-[70px] h-[70px] mb-2 -mt-2" viewBox="0 0 70 70" fill="none" stroke="#000" stroke-width="6" stroke-linecap="round">
                <circle cx="32" cy="32" r="28"/>
                <path d="M52 54l12 11"/>
            </svg>
            顺路搜
        </button>
        <button class="flex flex-col items-center ml-12">
            <svg class="w-[60px] h-[70px] mb-2 -mt-2" viewBox="0 0 60 70" fill="none" stroke="#000" stroke-width="5" stroke-linejoin="round" stroke-linecap="round">
                <path d="M30 3a27 27 0 0 1 27 27C57 46 40 57 33 65q-3 3-6 0C20 57 3 46 3 30A27 27 0 0 1 30 3z"/>
                <path d="M25 45V22h6q7 0 7 7t-7 7h-6" stroke-width="6"/>
            </svg>
            终点停车
        </button>
        <button class="flex flex-col items-center ml-[68px]">
            <svg class="w-[60px] h-[70px] mb-2 -mt-2" viewBox="0 0 60 70"><circle cx="8" cy="36" r="6"/><circle cx="30" cy="36" r="6"/><circle cx="52" cy="36" r="6"/></svg>
            更多
        </button>
        <button class="flex-1 ml-[56px] h-[125px] rounded-[24px] bg-[#2d82ff] text-white text-[44px] font-bold">开始导航</button>
    </footer>
</body>
</html>
